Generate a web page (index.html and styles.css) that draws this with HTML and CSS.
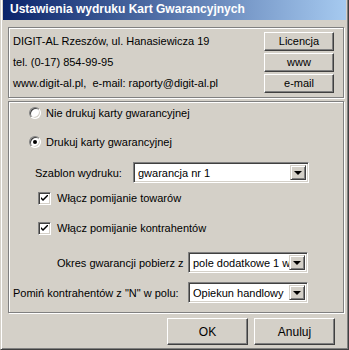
FILE: index.html
```html
<!DOCTYPE html>
<html lang="pl">
<head>
  <meta charset="UTF-8" />
  <title>Ustawienia wydruku Kart Gwarancyjnych</title>
  <link rel="stylesheet" href="styles.css">
</head>
<body>

  <div class="window">
    <div class="titlebar">Ustawienia wydruku Kart Gwarancyjnych</div>

    <div class="dialog">
      <div class="group info">
        <div class="info-row">
          <span>DIGIT-AL Rzeszów, ul. Hanasiewicza 19</span>
          <button class="btn btn-small">Licencja</button>
        </div>
        <div class="info-row">
          <span>tel. (0-17) 854-99-95</span>
          <button class="btn btn-small">www</button>
        </div>
        <div class="info-row">
          <span>www.digit-al.pl,&nbsp; e-mail: raporty@digit-al.pl</span>
          <button class="btn btn-small">e-mail</button>
        </div>
      </div>

      <div class="group options">
        <div class="row row-radio1">
          <span class="radio"></span>
          <span>Nie drukuj karty gwarancyjnej</span>
        </div>
        <div class="row row-radio2">
          <span class="radio checked"></span>
          <span>Drukuj karty gwarancyjnej</span>
        </div>
        <div class="row row-template">
          <span class="label label-template">Szablon wydruku:</span>
          <div class="combo combo-wide">
            <span class="combo-text">gwarancja nr 1</span>
            <span class="combo-arrow"></span>
          </div>
        </div>
        <div class="row row-check1">
          <span class="check">
            <svg width="7" height="7" viewBox="0 0 7 7"><path d="M0 2 L0 4 L2 6 L7 1 L7 -1 L2 4 Z" fill="#000"/></svg>
          </span>
          <span>Włącz pomijanie towarów</span>
        </div>
        <div class="row row-check2">
          <span class="check">
            <svg width="7" height="7" viewBox="0 0 7 7"><path d="M0 2 L0 4 L2 6 L7 1 L7 -1 L2 4 Z" fill="#000"/></svg>
          </span>
          <span>Włącz pomijanie kontrahentów</span>
        </div>
        <div class="row row-period">
          <span class="label label-period">Okres gwarancji pobierz z</span>
          <div class="combo combo-narrow">
            <span class="combo-text">pole dodatkowe 1 w</span>
            <span class="combo-arrow"></span>
          </div>
        </div>
        <div class="row row-skip">
          <span class="label label-skip">Pomiń kontrahentów z "N" w polu:</span>
          <div class="combo combo-narrow">
            <span class="combo-text">Opiekun handlowy</span>
            <span class="combo-arrow"></span>
          </div>
        </div>
      </div>

      <div class="footer">
        <button class="btn btn-big">OK</button>
        <button class="btn btn-big">Anuluj</button>
      </div>
    </div>
  </div>

</body>
</html>
```

FILE: styles.css
```css
* {
  box-sizing: border-box;
  margin: 0;
  padding: 0;
}

body {
  font-family: "Liberation Sans", Arial, sans-serif;
  font-size: 11px;
  color: #000;
  background-color: #d4d0c8;
}

.window {
  width: 349px;
  height: 350px;
  background-color: #d4d0c8;
  border-left: 1px solid #d4d0c8;
  border-right: 1px solid #404040;
  border-bottom: 1px solid #404040;
  box-shadow: inset 1px 0 #fff, inset -1px -1px #808080;
  padding: 0 2px 2px 2px;
  overflow: hidden;
}

.titlebar {
  height: 20px;
  padding-left: 7px;
  line-height: 19px;
  font-size: 12px;
  font-weight: bold;
  color: #fff;
  background: linear-gradient(to right, #0a246a, #a6caf0);
}

.dialog {
  padding: 7px 2px 0 5px;
}

/* etched group frame */
.group {
  border: 1px solid #808080;
  box-shadow: inset 1px 1px #fff, 1px 1px #fff;
}

.info {
  height: 71px;
  padding: 3px 9px 0 4px;
  display: flex;
  flex-direction: column;
  gap: 1px;
}

.info-row {
  height: 20px;
  display: flex;
  align-items: center;
  justify-content: space-between;
}

.btn {
  font-family: "Liberation Sans", Arial, sans-serif;
  font-size: 11px;
  color: #000;
  background-color: #d4d0c8;
  border: 1px solid;
  border-color: #fff #404040 #404040 #fff;
  box-shadow: inset -1px -1px #808080;
}

.btn-small {
  width: 70px;
  height: 19px;
}

.options {
  height: 212px;
  margin-top: 3px;
  padding: 2px 0 0 4px;
  display: flex;
  flex-direction: column;
}

.row {
  display: flex;
  align-items: center;
  height: 18px;
}

.row-radio1 { padding-left: 16px; }
.row-radio2 { padding-left: 16px; margin-top: 11px; }
.row-template { padding-left: 22px; margin-top: 11px; height: 21px; }
.row-check1 { padding-left: 25px; margin-top: 6px; }
.row-check2 { padding-left: 25px; margin-top: 12px; }
.row-period { padding-left: 44px; margin-top: 15px; height: 21px; }
.row-skip { margin-top: 9px; height: 21px; }

.radio {
  width: 12px;
  height: 12px;
  margin-right: 5px;
  border-radius: 50%;
  background-color: #fff;
  border: 1px solid;
  border-color: #808080 #fff #fff #808080;
  box-shadow: inset 1px 1px #404040, inset -1px -1px #d4d0c8;
  display: flex;
  align-items: center;
  justify-content: center;
}

.radio.checked::after {
  content: "";
  width: 4px;
  height: 4px;
  border-radius: 50%;
  background-color: #000;
}

.check {
  width: 13px;
  height: 13px;
  margin-right: 6px;
  background-color: #fff;
  border: 1px solid;
  border-color: #808080 #fff #fff #808080;
  box-shadow: inset 1px 1px #404040, inset -1px -1px #d4d0c8;
  display: flex;
  align-items: center;
  justify-content: center;
}

.label-template { width: 98px; }
.label-period { width: 131px; }
.label-skip { width: 175px; }

.combo {
  height: 21px;
  display: flex;
  align-items: center;
  background-color: #fff;
  border: 1px solid;
  border-color: #808080 #fff #fff #808080;
  box-shadow: inset 1px 1px #404040, inset -1px -1px #d4d0c8;
  padding: 2px;
}

.combo-wide { width: 176px; }
.combo-narrow { width: 120px; }

.combo-text {
  flex: 1;
  padding-left: 2px;
  font-size: 11px;
  white-space: nowrap;
  overflow: hidden;
}

.combo-arrow {
  width: 16px;
  height: 15px;
  background-color: #d4d0c8;
  border: 1px solid;
  border-color: #d4d0c8 #404040 #404040 #d4d0c8;
  box-shadow: inset 1px 1px #fff, inset -1px -1px #808080;
  display: flex;
  align-items: center;
  justify-content: center;
}

.combo-arrow::after {
  content: "";
  border-left: 4px solid transparent;
  border-right: 4px solid transparent;
  border-top: 4px solid #000;
  margin-top: 1px;
}

.footer {
  display: flex;
  justify-content: flex-end;
  gap: 6px;
  padding: 5px 9px 0 0;
}

.btn-big {
  width: 81px;
  height: 27px;
  font-size: 12px;
}
```
